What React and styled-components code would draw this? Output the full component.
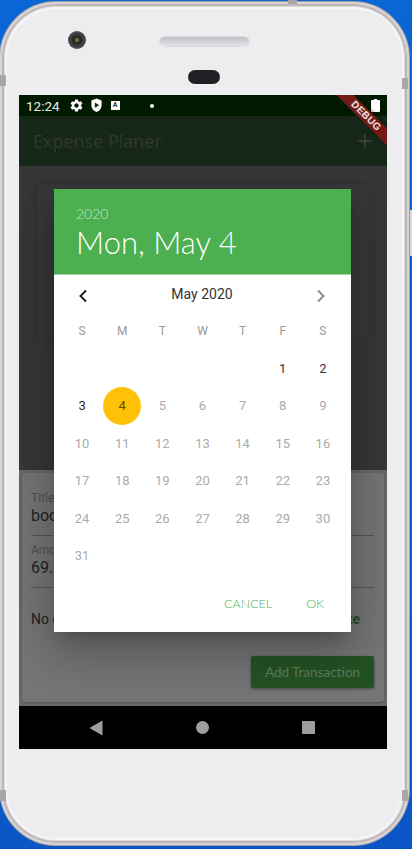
import styled, { createGlobalStyle } from "styled-components"
import { MdSettings, MdAdd } from "react-icons/md"

const GlobalStyle = createGlobalStyle`
  html, body {
    margin: 0;
    height: 849px;
    overflow: hidden;
    background: linear-gradient(175deg, #0a66d6 0%, #0a5ccc 50%, #0a56c6 100%);
  }
  * { box-sizing: border-box; }
`

const QUICK = `"Lato", "Open Sans", sans-serif`
const ROBOTO = `Roboto, "Liberation Sans", sans-serif`

const weekDays = ["S", "M", "T", "W", "T", "F", "S"]
const days = [null, null, null, null, null, 1, 2]
for (let d = 3; d <= 31; d++) days.push(d)

export default function App() {
  return (
    <>
      <GlobalStyle />
      <Phone>
        <TopBezel>
          <Camera />
          <Speaker />
          <Sensor />
        </TopBezel>
        <Screen>
          <StatusBar>
            <Time>12:24</Time>
            <MdSettings size={15} color="#fff" />
            <svg width="13" height="15" viewBox="0 0 14 16">
              <path d="M7 .5 1.5 2.6v5c0 3.4 2.3 6.3 5.5 7.4 3.2-1.1 5.5-4 5.5-7.4v-5z" fill="#fff" />
              <path d="M5.2 4.8v5.6L10 7.6z" fill="#0c2a0c" />
            </svg>
            <KeyboardIcon>A</KeyboardIcon>
            <Dot />
            <BatteryWrap>
              <svg width="9" height="13" viewBox="0 0 9 13">
                <path d="M3 0h3v1h2a1 1 0 0 1 1 1v10a1 1 0 0 1-1 1H1a1 1 0 0 1-1-1V2a1 1 0 0 1 1-1h2z" fill="#fff" />
              </svg>
            </BatteryWrap>
          </StatusBar>
          <AppBar>
            <AppTitle>Expense Planer</AppTitle>
            <MdAdd size={22} color="#364236" />
          </AppBar>
          <ChartArea>
            <ChartCard />
          </ChartArea>
          <Sheet>
            <FormCard>
              <Field>
                <FieldLabel>Title</FieldLabel>
                <FieldValue>book</FieldValue>
              </Field>
              <Field>
                <FieldLabel>Amount</FieldLabel>
                <FieldValue>69.80</FieldValue>
              </Field>
              <DateRow>
                <span>No date chosen</span>
                <ChooseDate>Choose Date</ChooseDate>
              </DateRow>
              <SubmitRow>
                <SubmitButton>Add Transaction</SubmitButton>
              </SubmitRow>
            </FormCard>
          </Sheet>
          <NavBar>
            <svg width="14" height="16" viewBox="0 0 14 16">
              <path d="M13.5.5v15L.5 8z" fill="#9e9e9e" />
            </svg>
            <HomeButton />
            <RecentButton />
          </NavBar>

          <Ribbon>DEBUG</Ribbon>

          <Dialog>
            <DialogHeader>
              <HeaderYear>2020</HeaderYear>
              <HeaderDate>Mon, May 4</HeaderDate>
            </DialogHeader>
            <MonthRow>
              <svg width="12" height="14" viewBox="0 0 12 14">
                <path d="M9 1.5 3.5 7 9 12.5" fill="none" stroke="#222" strokeWidth="2" />
              </svg>
              <MonthName>May 2020</MonthName>
              <svg width="12" height="14" viewBox="0 0 12 14">
                <path d="M3 1.5 8.5 7 3 12.5" fill="none" stroke="#8c8c8c" strokeWidth="2" />
              </svg>
            </MonthRow>
            <WeekRow>
              {weekDays.map((w, i) => (
                <WeekDay key={i}>{w}</WeekDay>
              ))}
            </WeekRow>
            <DayGrid>
              {days.map((d, i) => (
                <DayCell key={i} $selected={d === 4} $enabled={d !== null && d <= 3}>
                  {d}
                </DayCell>
              ))}
            </DayGrid>
            <DialogActions>
              <ActionButton>CANCEL</ActionButton>
              <ActionButton>OK</ActionButton>
            </DialogActions>
          </Dialog>
        </Screen>
      </Phone>
      <EdgeKey $side="right" $at={78} />
      <EdgeKey $side="left" $at={75} />
      <EdgeKey $side="right" $at={790} />
      <EdgeKey $side="left" $at={790} />
      <VolumeKey />
      <TopKey />
    </>
  )
}

const Phone = styled.div`
  position: relative;
  width: 409px;
  height: 843px;
  margin: 2px 0 0 0;
  border-radius: 56px;
  background: #ededef;
  border: 2px solid #d8d4d6;
  box-shadow: 0 0 0 1px #a8a2a4, inset 0 0 0 2px #bdb7b9, inset 0 0 0 3px #ded9db, inset 0 0 0 5px #f6f6f7;
  display: flex;
  flex-direction: column;
  align-items: center;
`

const TopBezel = styled.div`
  position: relative;
  height: 91px;
  width: 100%;
  flex: none;
`

const Camera = styled.div`
  position: absolute;
  left: 66px;
  top: 27px;
  width: 18px;
  height: 18px;
  border-radius: 50%;
  background: radial-gradient(circle, #6b6a3c 0 12%, #20201e 24%, #3a3a3c 45%, #6a6a6c 100%);
`

const Speaker = styled.div`
  position: absolute;
  left: 158px;
  top: 33px;
  width: 89px;
  height: 9px;
  border-radius: 5px;
  background: linear-gradient(#bfc1c5, #e2e3e6);
  box-shadow: 0 0 0 0.5px #cfcfd2;
`

const Sensor = styled.div`
  position: absolute;
  left: 186px;
  top: 66px;
  width: 32px;
  height: 14px;
  border-radius: 7px;
  background: #202024;
`

const Screen = styled.div`
  position: relative;
  width: 368px;
  height: 654px;
  flex: none;
  margin-right: 3px;
  overflow: hidden;
  display: flex;
  flex-direction: column;
  background: #373737;
`

const StatusBar = styled.div`
  height: 21px;
  flex: none;
  background: #001a00;
  display: flex;
  align-items: center;
  padding-left: 7px;
  color: #fff;

  & > svg:nth-of-type(1) {
    margin-left: 9px;
  }

  & > svg:nth-of-type(2) {
    margin-left: 6px;
  }
`

const Time = styled.span`
  font: 400 13.5px ${ROBOTO};
  color: #eee;
`

const KeyboardIcon = styled.span`
  width: 9px;
  height: 9px;
  margin-left: 8px;
  background: #fff;
  color: #333;
  font: 700 7px/9px ${ROBOTO};
  text-align: center;
`

const Dot = styled.span`
  width: 4px;
  height: 4px;
  margin-left: 30px;
  border-radius: 50%;
  background: #fff;
`

const BatteryWrap = styled.span`
  display: flex;
  margin-left: auto;
  margin-right: 7px;
  margin-bottom: 1px;
`

const AppBar = styled.div`
  height: 50px;
  flex: none;
  background: #182818;
  display: flex;
  align-items: center;
  justify-content: space-between;
  padding: 0 11px 0 14px;
`

const AppTitle = styled.span`
  font: 400 18px "Open Sans", sans-serif;
  color: #2e3a2e;
`

const ChartArea = styled.div`
  flex: 1;
  min-height: 0;
  padding: 18px 18px 0;
  background: #373737;
`

const ChartCard = styled.div`
  height: 153px;
  border-radius: 4px;
  background: #383838;
  box-shadow: 0 0 8px rgba(0, 0, 0, 0.12);
`

const Sheet = styled.div`
  height: 236px;
  flex: none;
  padding: 3px 3px 4px;
  background: #686868;
`

const FormCard = styled.div`
  height: 100%;
  padding: 19px 10px 0 9px;
  border-radius: 4px;
  background: #757575;
  box-shadow: 0 1px 2px rgba(0, 0, 0, 0.2);
`

const Field = styled.div`
  height: 44px;
  border-bottom: 1px solid #555;
  margin-bottom: 8px;
  font-family: ${ROBOTO};
`

const FieldLabel = styled.div`
  font-size: 12px;
  line-height: 13px;
  color: #505050;
`

const FieldValue = styled.div`
  font-size: 16px;
  line-height: 19px;
  margin-top: 1px;
  color: #222;
`

const DateRow = styled.div`
  display: flex;
  justify-content: space-between;
  align-items: center;
  height: 20px;
  margin-top: 21px;
  padding-right: 14px;
  font: 400 14px ${ROBOTO};
  color: #222;
`

const ChooseDate = styled.span`
  font-weight: 700;
  color: #245224;
`

const SubmitRow = styled.div`
  display: flex;
  justify-content: flex-end;
  margin-top: 27px;
`

const SubmitButton = styled.div`
  width: 123px;
  height: 32px;
  border-radius: 2px;
  background: #245224;
  color: #5f7d5f;
  font: 400 13.5px/32px ${QUICK};
  text-align: center;
  box-shadow: 0 1px 3px rgba(0, 0, 0, 0.4);
`

const NavBar = styled.div`
  height: 43px;
  flex: none;
  background: #000;
  display: flex;
  align-items: center;
  padding-left: 70px;
  gap: 93px;
`

const HomeButton = styled.span`
  width: 13px;
  height: 13px;
  border-radius: 50%;
  background: #9e9e9e;
`

const RecentButton = styled.span`
  width: 13px;
  height: 13px;
  border-radius: 1px;
  background: #9e9e9e;
`

const Ribbon = styled.div`
  position: absolute;
  left: 295px;
  top: 15px;
  width: 104px;
  height: 12px;
  transform: rotate(45deg);
  background: #741b16;
  box-shadow: 0 0 5px rgba(0, 30, 20, 0.9);
  color: #f0e0e0;
  font: 700 10px/12px "Liberation Sans", sans-serif;
  letter-spacing: 0.3px;
  text-align: center;
`

const Dialog = styled.div`
  position: absolute;
  left: 35px;
  top: 94px;
  width: 297px;
  height: 443px;
  background: #fff;
  box-shadow: 0 11px 15px -7px rgba(0, 0, 0, 0.2), 0 24px 38px 3px rgba(0, 0, 0, 0.14),
    0 9px 46px 8px rgba(0, 0, 0, 0.12);
`

const DialogHeader = styled.div`
  height: 86px;
  padding: 16px 22px 0;
  background: #4caf50;
  border-bottom: 1px solid #a5d6a7;
  color: #fff;
  font-family: ${QUICK};
`

const HeaderYear = styled.div`
  font-size: 14px;
  line-height: 17px;
  font-weight: 300;
  color: #c9e7ca;
`

const HeaderDate = styled.div`
  font-size: 31px;
  line-height: 38px;
  font-weight: 300;
  margin-top: 1px;
`

const MonthRow = styled.div`
  height: 37px;
  display: flex;
  align-items: flex-start;
  justify-content: space-between;
  padding: 14px 24px 0 23px;
`

const MonthName = styled.span`
  font: 400 14px/8px ${ROBOTO};
  color: #333;
  margin-top: 1px;
`

const WeekRow = styled.div`
  display: grid;
  grid-template-columns: repeat(7, 1fr);
  height: 37px;
  padding: 0 8px;
  align-items: center;
`

const WeekDay = styled.span`
  font: 400 12px ${ROBOTO};
  color: #9a9a9a;
  text-align: center;
`

const DayGrid = styled.div`
  display: grid;
  grid-template-columns: repeat(7, 1fr);
  grid-auto-rows: 37.5px;
  height: 226px;
  padding: 0 8px;
`

const DayCell = styled.div`
  display: flex;
  align-items: center;
  justify-content: center;
  width: 38px;
  height: 38px;
  justify-self: center;
  border-radius: 50%;
  font: 400 13px ${ROBOTO};
  color: ${(p) => (p.$selected ? "#5c4a00" : p.$enabled ? "#333" : "#ababab")};
  background: ${(p) => (p.$selected ? "#ffc107" : "transparent")};
`

const DialogActions = styled.div`
  display: flex;
  justify-content: flex-end;
  gap: 34px;
  padding: 21px 27px 0;
`

const ActionButton = styled.span`
  font: 300 12.5px ${QUICK};
  color: #4caf50;
`

const EdgeKey = styled.div`
  position: absolute;
  ${(p) => (p.$side === "left" ? "left: 0;" : "left: 402px;")}
  top: ${(p) => p.$at}px;
  width: 6px;
  height: 11px;
  background: #a9a6a8;
`

const VolumeKey = styled.div`
  position: absolute;
  left: 410px;
  top: 210px;
  width: 2px;
  height: 46px;
  background: #d9d9db;
`

const TopKey = styled.div`
  position: absolute;
  left: 288px;
  top: 0;
  width: 9px;
  height: 4px;
  background: #a9a6a8;
`
